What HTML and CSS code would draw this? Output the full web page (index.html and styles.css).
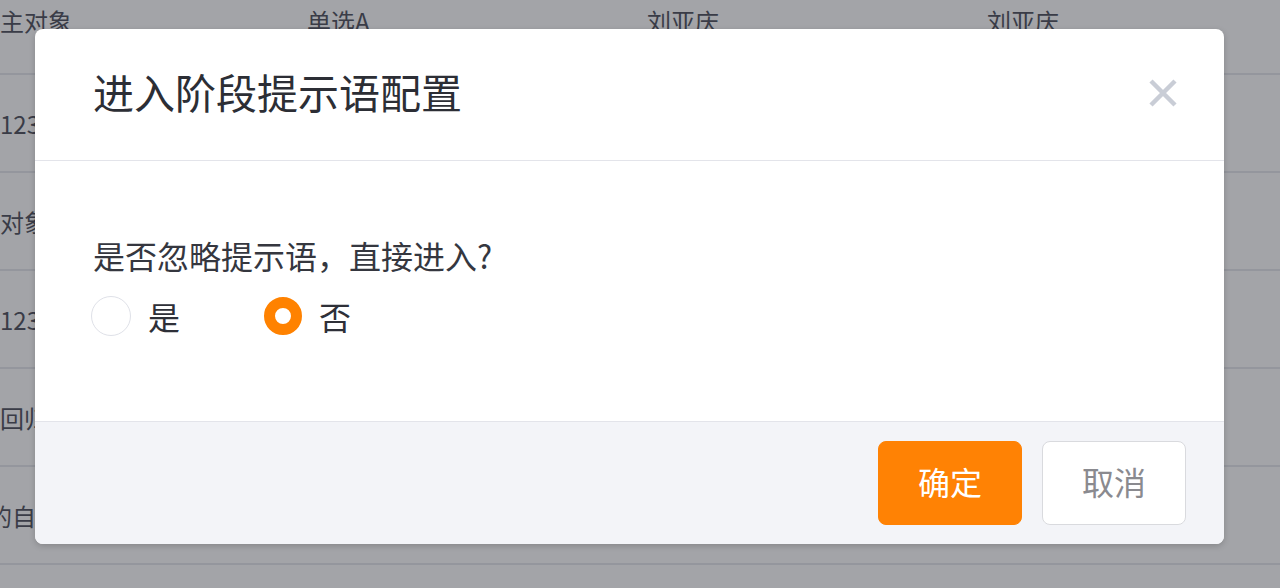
FILE: index.html
```html
<!DOCTYPE html>
<html lang="zh-CN">
<head>
<meta charset="utf-8">
<title>进入阶段提示语配置</title>
<link rel="stylesheet" href="styles.css">
</head>
<body>
<div class="table">
  <div class="row first">
    <div class="cell">主对象</div>
    <div class="cell">单选A</div>
    <div class="cell">刘亚庆</div>
    <div class="cell">刘亚庆</div>
  </div>
  <div class="row"><div class="cell">123</div><div class="cell"></div><div class="cell"></div><div class="cell"></div></div>
  <div class="row"><div class="cell">对象</div><div class="cell"></div><div class="cell"></div><div class="cell"></div></div>
  <div class="row"><div class="cell">123</div><div class="cell"></div><div class="cell"></div><div class="cell"></div></div>
  <div class="row"><div class="cell">回归</div><div class="cell"></div><div class="cell"></div><div class="cell"></div></div>
  <div class="row"><div class="cell"><span class="shift">的自定义</span></div><div class="cell"></div><div class="cell"></div><div class="cell"></div></div>
  <div class="row last"><div class="cell"></div><div class="cell"></div><div class="cell"></div><div class="cell"></div></div>
</div>

<div class="dialog">
  <div class="dialog-header">
    <div class="dialog-title">进入阶段提示语配置</div>
    <svg class="close" width="30" height="30" viewBox="0 0 30 30">
      <path d="M3 3 L27 27 M27 3 L3 27" stroke="#c9cdd6" stroke-width="4.5" stroke-linecap="butt" fill="none"/>
    </svg>
  </div>
  <div class="dialog-body">
    <div class="question">是否忽略提示语，直接进入?</div>
    <div class="radios">
      <label class="radio"><span class="circle"></span><span class="label">是</span></label>
      <label class="radio checked"><span class="circle"></span><span class="label">否</span></label>
    </div>
  </div>
  <div class="dialog-footer">
    <button class="btn primary">确定</button>
    <button class="btn">取消</button>
  </div>
</div>
</body>
</html>
```

FILE: styles.css
```css
* { box-sizing: border-box; }
html, body { margin: 0; padding: 0; }
body {
  width: 1280px;
  height: 588px;
  overflow: hidden;
  background: #a3a4a8;
  font-family: "Noto Sans CJK SC", "Noto Sans", sans-serif;
  position: relative;
}

.table { width: 1280px; }
.row {
  display: grid;
  grid-template-columns: 307px 340px 340px 1fr;
  height: 98px;
  border-bottom: 2px solid #94969d;
  align-items: center;
  color: #3a3c47;
  font-size: 24px;
}
.row.first {
  height: 75px;
  padding-bottom: 32px;
}
.row.last { height: 23px; border-bottom: none; }
.cell { white-space: nowrap; overflow: hidden; }
.shift { display: inline-block; margin-left: -12px; }

.dialog {
  position: absolute;
  left: 35px;
  top: 29px;
  width: 1189px;
  height: 515px;
  background: #fff;
  border-radius: 8px;
  box-shadow: 0 2px 6px rgba(0, 0, 0, 0.18);
  display: flex;
  flex-direction: column;
  overflow: hidden;
}
.dialog-header {
  height: 132px;
  border-bottom: 1px solid #e3e4ea;
  display: flex;
  align-items: center;
  justify-content: space-between;
  padding: 0 46px 6px 58px;
  flex-shrink: 0;
}
.dialog-title {
  font-size: 41px;
  color: #2c2e35;
  line-height: 1;
}
.close { display: block; margin-top: 2px; }

.dialog-body {
  height: 260px;
  padding: 74px 58px 0;
  flex-shrink: 0;
}
.question {
  font-size: 32px;
  line-height: 40px;
  color: #35373f;
}
.radios {
  display: flex;
  gap: 83px;
  margin-top: 21px;
  margin-left: -2px;
}
.radio {
  display: flex;
  align-items: center;
  gap: 17px;
}
.circle {
  width: 40px;
  height: 40px;
  border-radius: 50%;
  border: 1.5px solid #dfe1e8;
  background: #fff;
}
.radio.checked .circle {
  width: 38px;
  height: 38px;
  margin-left: 1px;
  border: 11px solid #ff8200;
}
.label {
  font-size: 32px;
  line-height: 40px;
  color: #2e3038;
}

.dialog-footer {
  flex: 1;
  background: #f3f4f8;
  border-top: 1px solid #e3e4ea;
  display: flex;
  justify-content: flex-end;
  align-items: flex-start;
  gap: 20px;
  padding: 19px 38px 0 0;
}
.btn {
  width: 144px;
  height: 84px;
  border-radius: 8px;
  border: 1.5px solid #d9dade;
  background: #fff;
  color: #8a8a8f;
  font-family: "Noto Sans CJK SC", "Noto Sans", sans-serif;
  font-size: 32px;
  padding: 0 0 5px;
}
.btn.primary {
  background: #ff8204;
  border-color: #ff8204;
  color: #fff;
}
```
